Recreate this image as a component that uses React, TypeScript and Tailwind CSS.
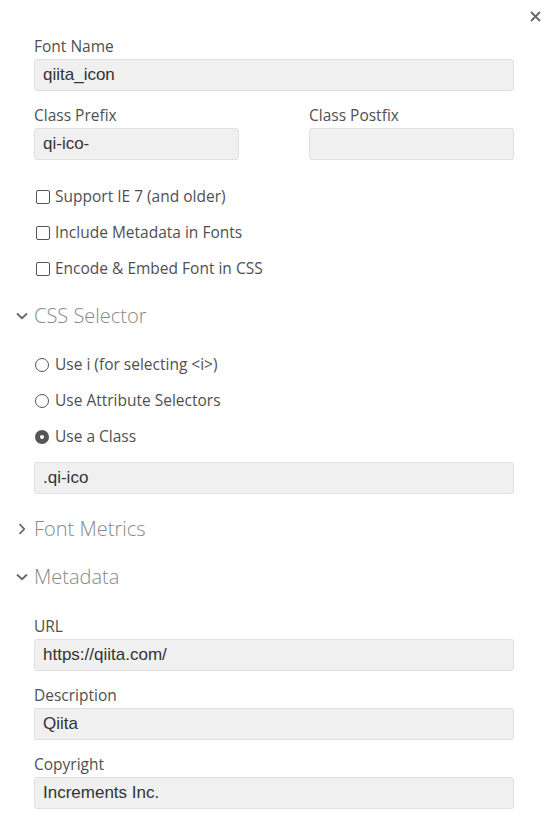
import React from "react";

function Label({ children }: { children: React.ReactNode }) {
  return <div className="h-[20px] leading-[20px] text-[15.5px] text-[#505050] mb-[3px]">{children}</div>;
}

function Input({ value }: { value?: string }) {
  return (
    <div className="h-[32px] rounded-[3px] border border-[#e0e0e0] bg-[#f0f0f0] px-[8px] flex items-center font-['Liberation_Sans',Arial,sans-serif] text-[17px] text-[#333]">
      {value}
    </div>
  );
}

function Check({ label }: { label: string }) {
  return (
    <div className="h-[36px] flex items-center">
      <span className="ml-[2px] w-[14px] h-[14px] border-[1.5px] border-[#555] rounded-[2px] bg-white" />
      <span className="ml-[5px] text-[15.5px] text-[#505050]">{label}</span>
    </div>
  );
}

function Radio({ label, checked }: { label: string; checked?: boolean }) {
  return (
    <div className="h-[36px] flex items-center">
      {checked ? (
        <span className="ml-[1px] w-[14px] h-[14px] rounded-full bg-[#555] flex items-center justify-center">
          <span className="w-[4px] h-[4px] rounded-full bg-white" />
        </span>
      ) : (
        <span className="ml-[1px] w-[14px] h-[14px] rounded-full border-[1.5px] border-[#555]" />
      )}
      <span className="ml-[6px] text-[15.5px] text-[#505050]">{label}</span>
    </div>
  );
}

function Heading({ label, open }: { label: string; open?: boolean }) {
  return (
    <div className="h-[36px] flex items-center -ml-[21px]">
      <span className="w-[17px] flex justify-center">
        {open ? (
          <svg width="12" height="8" viewBox="0 0 12 8">
            <path d="M1 1.5 L6 6.2 L11 1.5" fill="none" stroke="#666" strokeWidth="1.8" />
          </svg>
        ) : (
          <svg width="8" height="12" viewBox="0 0 8 12">
            <path d="M1.5 1 L6.2 6 L1.5 11" fill="none" stroke="#666" strokeWidth="1.8" />
          </svg>
        )}
      </span>
      <span className="ml-[4px] text-[20px] font-light text-[#888]">{label}</span>
    </div>
  );
}

export default function App() {
  return (
    <div className="relative w-[552px] h-[823px] bg-white font-['Open_Sans',sans-serif] overflow-hidden">
      <button className="absolute right-[11px] top-[10px] w-[12px] h-[12px] flex items-center justify-center">
        <svg width="11" height="11" viewBox="0 0 11 11">
          <path d="M1 1 L10 10 M10 1 L1 10" stroke="#666" strokeWidth="1.8" />
        </svg>
      </button>
      <div className="pl-[34px] pr-[38px] pt-[36px]">
        <Label>Font Name</Label>
        <Input value="qiita_icon" />
        <div className="mt-[14px] grid grid-cols-2 gap-x-[70px]">
          <div>
            <Label>Class Prefix</Label>
            <Input value="qi-ico-" />
          </div>
          <div>
            <Label>Class Postfix</Label>
            <Input />
          </div>
        </div>
        <div className="mt-[19px]">
          <Check label="Support IE 7 (and older)" />
          <Check label="Include Metadata in Fonts" />
          <Check label="Encode & Embed Font in CSS" />
        </div>
        <div className="mt-[11px]">
          <Heading label="CSS Selector" open />
        </div>
        <div className="mt-[13px]">
          <Radio label="Use i (for selecting <i>)" />
          <Radio label="Use Attribute Selectors" />
          <Radio label="Use a Class" checked />
        </div>
        <div className="mt-[7px]">
          <Input value=".qi-ico" />
        </div>
        <div className="mt-[17px]">
          <Heading label="Font Metrics" />
        </div>
        <div className="mt-[12px]">
          <Heading label="Metadata" open />
        </div>
        <div className="mt-[21px]">
          <Label>URL</Label>
          <Input value="https://qiita.com/" />
          <div className="mt-[14px]">
            <Label>Description</Label>
            <Input value="Qiita" />
          </div>
          <div className="mt-[14px]">
            <Label>Copyright</Label>
            <Input value="Increments Inc." />
          </div>
        </div>
      </div>
    </div>
  );
}
